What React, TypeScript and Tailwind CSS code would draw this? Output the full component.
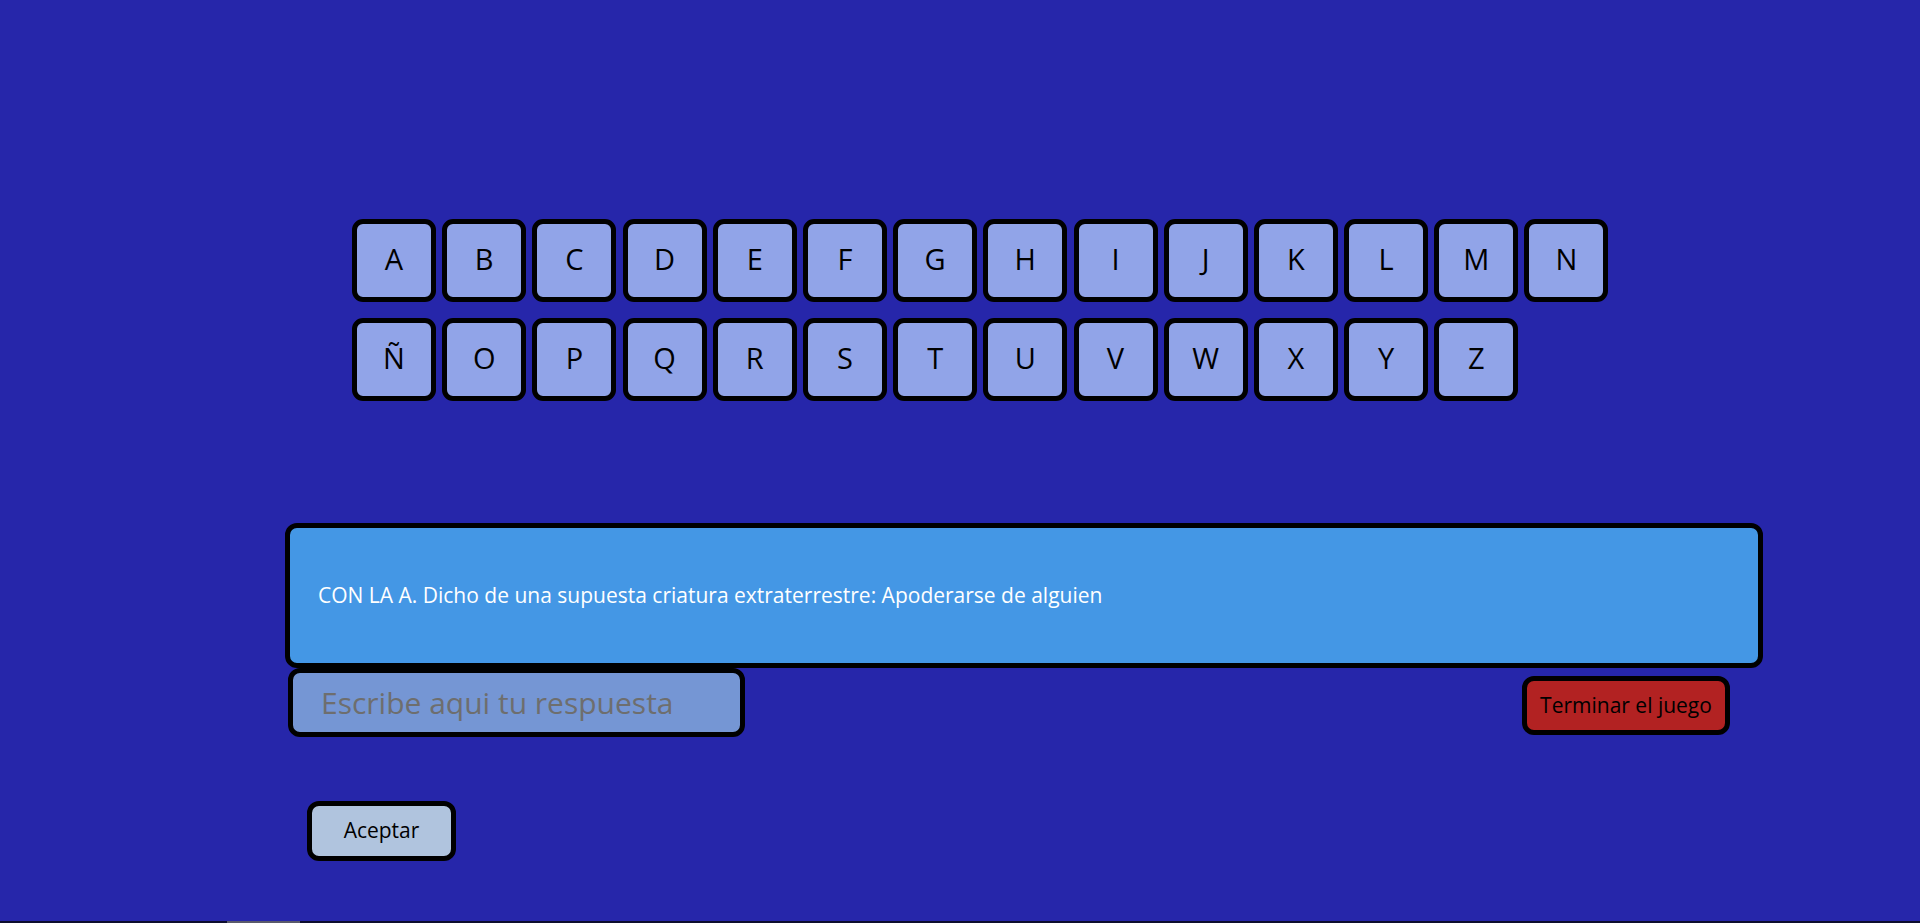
import React from "react";

const row1 = ["A", "B", "C", "D", "E", "F", "G", "H", "I", "J", "K", "L", "M", "N"];
const row2 = ["Ñ", "O", "P", "Q", "R", "S", "T", "U", "V", "W", "X", "Y", "Z"];

function Key({ l }: { l: string }) {
  return (
    <button className="w-[84px] h-[83px] shrink-0 rounded-[11px] border-[5px] border-black bg-[#91a4e8] text-black text-[29px] font-medium leading-none flex items-center justify-center pb-[4px]">
      {l}
    </button>
  );
}

export default function App() {
  return (
    <div
      className="w-full h-[923px] bg-[#2626aa] flex flex-col overflow-hidden"
      style={{ fontFamily: '"Open Sans", "Noto Sans", sans-serif' }}
    >
      <div className="pt-[219px] pl-[352px] flex flex-col gap-[16px]">
        <div className="flex gap-[6.2px]">
          {row1.map((l) => (
            <Key key={l} l={l} />
          ))}
        </div>
        <div className="flex gap-[6.2px]">
          {row2.map((l) => (
            <Key key={l} l={l} />
          ))}
        </div>
      </div>

      <div className="ml-[285px] mt-[122px] w-[1478px] flex flex-col">
        <div className="h-[145px] rounded-[12px] border-[5px] border-black bg-[#4497e5] flex items-center pl-[28px]">
          <p className="text-white text-[21px] leading-none">
            CON LA A. Dicho de una supuesta criatura extraterrestre: Apoderarse de alguien
          </p>
        </div>
        <div className="flex items-start justify-between pl-[3px] pr-[33px]">
          <input
            type="text"
            placeholder="Escribe aqui tu respuesta"
            className="w-[457px] h-[69px] rounded-[12px] border-[5px] border-black bg-[#7596d4] pl-[28px] text-[30px] text-black placeholder:text-[#6e6e6e] outline-none"
          />
          <button className="mt-[8px] w-[208px] h-[59px] rounded-[12px] border-[5px] border-black bg-[#b22222] text-black text-[21px]">
            Terminar el juego
          </button>
        </div>
      </div>

      <div className="ml-[307px] mt-[64px]">
        <button className="w-[149px] h-[60px] rounded-[12px] border-[5px] border-black bg-[#b0c4de] text-black text-[21px]">
          Aceptar
        </button>
      </div>

      <div className="mt-auto h-[2px] w-full bg-[#0e0e2e] flex">
        <div className="ml-[227px] w-[73px] h-full bg-[#5a5a6a]" />
      </div>
    </div>
  );
}
